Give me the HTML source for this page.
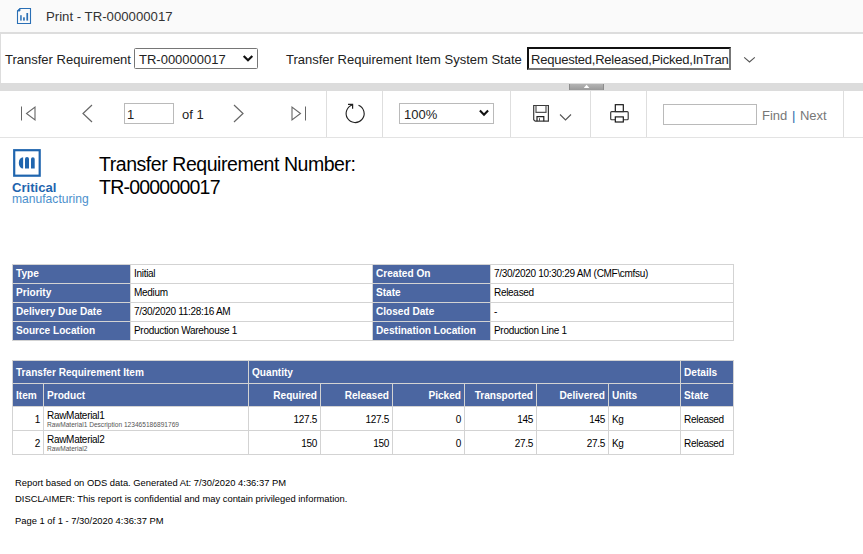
<!DOCTYPE html>
<html><head><meta charset="utf-8">
<style>
*{box-sizing:border-box;margin:0;padding:0}
html,body{width:863px;height:554px;overflow:hidden;background:#fff;font-family:"Liberation Sans",sans-serif;color:#222}
.abs{position:absolute}
#titlebar{left:0;top:0;width:863px;height:32px;background:#fafafa}
#tb-border{left:0;top:32px;width:863px;height:2px;background:#dddddd}
#filters{left:0;top:34px;width:863px;height:49px;background:#fff;border-left:1px solid #dddddd}
#splitter{left:0;top:83px;width:863px;height:8px;background:#dcdcdc}
#tab{left:569px;top:84px;width:35px;height:6px;background:linear-gradient(#b4b4b4,#9a9a9a);border-left:1px solid #8c8c8c;border-right:1px solid #8c8c8c}
#toolbar{left:0;top:91px;width:863px;height:47px;background:#fff;border-bottom:1px solid #e3e3e3}
.sep{position:absolute;top:91px;width:1px;height:46px;background:#dedede}
.t13{font-size:13px;white-space:nowrap;line-height:16px}
.rep{font-size:9.4px;letter-spacing:0;white-space:nowrap;line-height:12px;color:#000}
table{border-collapse:collapse;position:absolute;table-layout:fixed}
td{border:1px solid #d3d3d3;font-size:10px;letter-spacing:-0.3px;color:#000;white-space:nowrap;overflow:hidden;padding:0 3px;vertical-align:middle;line-height:11px}
.t1 td{padding-bottom:2px}
tr.d td{padding-top:2px}
.sub{font-size:6.6px;letter-spacing:0;line-height:8px;color:#555}
td.h{background:#4b66a1;color:#fff;font-weight:bold;font-size:10.1px;letter-spacing:0}
td.r{text-align:right}
</style></head><body>
<div id="titlebar" class="abs"></div>
<svg class="abs" style="left:16px;top:7px" width="18" height="19" viewBox="0 0 18 19">
  <path d="M4 1.5 H14.5 V16.5 H1.5 V4 Z" fill="none" stroke="#2a6fb5" stroke-width="1.1"/>
  <path d="M1.5 4 L4 1.5 V4 Z" fill="#2a6fb5" stroke="#2a6fb5" stroke-width="0.8"/>
  <rect x="4.2" y="8.2" width="1.5" height="5.4" fill="#2a6fb5"/>
  <rect x="7.1" y="10.3" width="1.7" height="3.3" fill="#2a6fb5"/>
  <rect x="10.4" y="6" width="1.7" height="7.6" fill="#2a6fb5"/>
</svg>
<div class="abs t13" style="left:46px;top:9px;color:#333;font-size:13.2px">Print - TR-000000017</div>
<div id="tb-border" class="abs"></div>
<div id="filters" class="abs"></div>
<div class="abs t13" style="left:5px;top:52px;color:#222">Transfer Requirement</div>
<div class="abs" style="left:134px;top:48px;width:124px;height:21px;border:1px solid #767676;border-radius:1.5px;background:#fff"></div>
<div class="abs t13" style="left:139px;top:52px;color:#222">TR-000000017</div>
<svg class="abs" style="left:242px;top:53px" width="12" height="10" viewBox="0 0 12 10"><path d="M1.7 3 L6 7.2 L10.3 3" fill="none" stroke="#111" stroke-width="2.2"/></svg>
<div class="abs t13" style="left:286px;top:52px;color:#222">Transfer Requirement Item System State</div>
<div class="abs" style="left:527px;top:47px;width:204px;height:23px;border:2px solid;border-color:#111 #777 #777 #111;background:#fff;overflow:hidden">
  <div class="t13" style="position:absolute;left:2px;top:3px;color:#222;letter-spacing:-0.23px">Requested,Released,Picked,InTran</div>
</div>
<svg class="abs" style="left:743px;top:55px" width="13" height="9" viewBox="0 0 13 9"><path d="M1.2 2.4 L6.5 7 L11.8 2.4" fill="none" stroke="#555" stroke-width="1.1"/></svg>
<div id="splitter" class="abs"></div>
<div id="tab" class="abs"></div>
<svg class="abs" style="left:582px;top:84px" width="10" height="5" viewBox="0 0 10 5"><path d="M1.8 4 L4.6 0.8 L7.4 4 Z" fill="#fff"/></svg>
<div id="toolbar" class="abs"></div>
<div class="sep" style="left:326px"></div>
<div class="sep" style="left:382px"></div>
<div class="sep" style="left:510px"></div>
<div class="sep" style="left:590px"></div>
<div class="sep" style="left:646px"></div>
<div class="sep" style="left:843px"></div>
<!-- first -->
<svg class="abs" style="left:20px;top:105px" width="18" height="17" viewBox="0 0 18 17">
  <path d="M1.5 1.5 V15.5" stroke="#666" stroke-width="1"/>
  <path d="M15 2 V15 L6.5 8.5 Z" fill="none" stroke="#666" stroke-width="1.1"/>
</svg>
<svg class="abs" style="left:81px;top:104px" width="13" height="20" viewBox="0 0 13 20">
  <path d="M11 1 L2 9.5 L11 18" fill="none" stroke="#666" stroke-width="1.2"/>
</svg>
<div class="abs" style="left:124px;top:103px;width:50px;height:21px;border:1px solid #bababa;background:#fff"></div>
<div class="abs t13" style="left:127px;top:107px;color:#222">1</div>
<div class="abs t13" style="left:182px;top:107px;color:#222">of 1</div>
<svg class="abs" style="left:232px;top:104px" width="13" height="20" viewBox="0 0 13 20">
  <path d="M2 1 L11 9.5 L2 18" fill="none" stroke="#666" stroke-width="1.2"/>
</svg>
<svg class="abs" style="left:289px;top:105px" width="18" height="17" viewBox="0 0 18 17">
  <path d="M16.5 1.5 V15.5" stroke="#666" stroke-width="1"/>
  <path d="M3 2 V15 L11.5 8.5 Z" fill="none" stroke="#666" stroke-width="1.1"/>
</svg>
<svg class="abs" style="left:343px;top:102px" width="24" height="23" viewBox="0 0 24 23">
  <path d="M10 2.8 A9 9 0 1 0 15.5 3.2" fill="none" stroke="#222" stroke-width="1.15"/>
  <path d="M5 2.3 H9.6 V6.8" fill="none" stroke="#222" stroke-width="1.2"/>
</svg>
<div class="abs" style="left:399px;top:103px;width:95px;height:21px;border:1px solid #bababa;background:#fff"></div>
<div class="abs t13" style="left:404px;top:107px;color:#222">100%</div>
<svg class="abs" style="left:479px;top:109px" width="11" height="8" viewBox="0 0 11 8"><path d="M0.9 1.6 L5 5.7 L9.1 1.6" fill="none" stroke="#111" stroke-width="2.1"/></svg>
<!-- save -->
<svg class="abs" style="left:532px;top:104px" width="19" height="19" viewBox="0 0 19 19">
  <path d="M1.7 1.5 H16.4 V17.2 H3.2 L1.7 15.7 Z" fill="none" stroke="#3a3a3a" stroke-width="1.2"/>
  <path d="M4 1.5 V8.4 H14 V1.5" fill="none" stroke="#555" stroke-width="1.2"/>
  <path d="M5 17.2 V12.7 H11.8 V17.2" fill="none" stroke="#222" stroke-width="1.2"/>
  <path d="M7.5 14.2 V17" stroke="#555" stroke-width="1"/>
</svg>
<svg class="abs" style="left:559px;top:113px" width="13" height="9" viewBox="0 0 13 9"><path d="M1 1.5 L6.5 7 L12 1.5" fill="none" stroke="#555" stroke-width="1.1"/></svg>
<!-- print -->
<svg class="abs" style="left:609px;top:103px" width="21" height="21" viewBox="0 0 21 21">
  <rect x="6.3" y="1.7" width="8" height="6.9" fill="none" stroke="#111" stroke-width="1.15"/>
  <path d="M6 16.7 H2.7 Q1.7 16.7 1.7 15.7 V9.6 Q1.7 8.6 2.7 8.6 H18.2 Q19.2 8.6 19.2 9.6 V15.7 Q19.2 16.7 18.2 16.7 H14.5" fill="none" stroke="#333" stroke-width="1.15"/>
  <rect x="6.3" y="13.9" width="8" height="5.1" fill="#fff" stroke="#111" stroke-width="1.15"/>
</svg>
<div class="abs" style="left:663px;top:104px;width:94px;height:21px;border:1px solid #bababa;background:#fff"></div>
<div class="abs t13" style="left:762px;top:108px;color:#777;word-spacing:1px">Find <span style="color:#2b6cab">|</span> Next</div>

<!-- report -->
<svg class="abs" style="left:12px;top:148px" width="30" height="30" viewBox="0 0 30 30">
  <rect x="2.2" y="2.2" width="25.5" height="25.5" fill="none" stroke="#1f65ae" stroke-width="2.2"/>
  <path d="M11.1 9.2 A4.3 5.7 0 0 0 11.1 20.6 Z" fill="#1f65ae"/>
  <path d="M13 20.6 V11 A2 2 0 0 1 17 11 V20.6 Z" fill="#1f65ae"/>
  <path d="M19 20.6 V11 A1.85 1.85 0 0 1 22.7 11 V20.6 Z" fill="#1f65ae"/>
</svg>
<div class="abs" style="left:12px;top:181px;font-size:13.1px;font-weight:bold;color:#1f65ae;line-height:14px;white-space:nowrap">Critical</div>
<div class="abs" style="left:12px;top:192px;font-size:12.1px;color:#4b8fcc;line-height:14px;white-space:nowrap">manufacturing</div>
<div class="abs" style="left:99px;top:153px;font-size:19.5px;letter-spacing:-0.45px;color:#000;line-height:23px;white-space:nowrap">Transfer Requirement Number:<br><span style="letter-spacing:-0.78px">TR-000000017</span></div>

<table class="t1" style="left:12px;top:264px;width:721px">
<colgroup><col style="width:118px"><col style="width:242px"><col style="width:118px"><col style="width:243px"></colgroup>
<tr style="height:19px"><td class="h">Type</td><td>Initial</td><td class="h">Created On</td><td>7/30/2020 10:30:29 AM (CMF\cmfsu)</td></tr>
<tr style="height:19px"><td class="h">Priority</td><td>Medium</td><td class="h">State</td><td>Released</td></tr>
<tr style="height:19px"><td class="h">Delivery Due Date</td><td>7/30/2020 11:28:16 AM</td><td class="h">Closed Date</td><td>-</td></tr>
<tr style="height:19px"><td class="h">Source Location</td><td>Production Warehouse 1</td><td class="h">Destination Location</td><td>Production Line 1</td></tr>
</table>

<table style="left:12px;top:360px;width:721px">
<colgroup><col style="width:31px"><col style="width:205px"><col style="width:72px"><col style="width:72px"><col style="width:72px"><col style="width:72px"><col style="width:72px"><col style="width:72px"><col style="width:53px"></colgroup>
<tr style="height:23px"><td class="h" colspan="2">Transfer Requirement Item</td><td class="h" colspan="6">Quantity</td><td class="h">Details</td></tr>
<tr style="height:23px"><td class="h">Item</td><td class="h">Product</td><td class="h r">Required</td><td class="h r">Released</td><td class="h r">Picked</td><td class="h r">Transported</td><td class="h r">Delivered</td><td class="h">Units</td><td class="h">State</td></tr>
<tr class="d" style="height:24px"><td class="r">1</td><td>RawMaterial1<div class="sub">RawMaterial1 Description 123465186891769</div></td><td class="r">127.5</td><td class="r">127.5</td><td class="r">0</td><td class="r">145</td><td class="r">145</td><td>Kg</td><td>Released</td></tr>
<tr class="d" style="height:24px"><td class="r">2</td><td>RawMaterial2<div class="sub">RawMaterial2</div></td><td class="r">150</td><td class="r">150</td><td class="r">0</td><td class="r">27.5</td><td class="r">27.5</td><td>Kg</td><td>Released</td></tr>
</table>

<div class="abs rep" style="left:15px;top:477px">Report based on ODS data. Generated At: 7/30/2020 4:36:37 PM</div>
<div class="abs rep" style="left:15px;top:493px">DISCLAIMER: This report is confidential and may contain privileged information.</div>
<div class="abs rep" style="left:15px;top:515px">Page 1 of 1 - 7/30/2020 4:36:37 PM</div>
</body></html>
